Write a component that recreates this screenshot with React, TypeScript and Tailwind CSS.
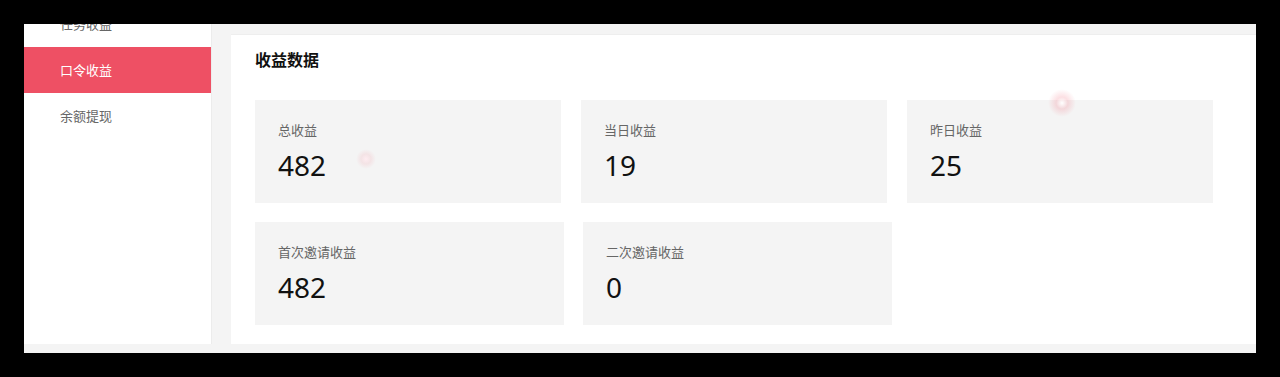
import React from "react";

const menu = [
  { label: "任务收益", active: false },
  { label: "口令收益", active: true },
  { label: "余额提现", active: false },
];

const topStats = [
  { label: "总收益", value: "482" },
  { label: "当日收益", value: "19" },
  { label: "昨日收益", value: "25" },
];

const inviteStats = [
  { label: "首次邀请收益", value: "482" },
  { label: "二次邀请收益", value: "0" },
];

function StatBox({ label, value, width }: { label: string; value: string; width: string }) {
  return (
    <div className={`${width} h-[103px] shrink-0 bg-[#f4f4f4] pl-[23px] pt-[20px]`}>
      <div className="text-[13px] leading-[20px] text-[#666]">{label}</div>
      <div className="mt-[7px] text-[28px] leading-[36px] text-[#111]">{value}</div>
    </div>
  );
}

export default function App() {
  return (
    <div
      className="h-[377px] w-[1280px] bg-black pl-[24px] pt-[24px]"
      style={{ fontFamily: '"Noto Sans", "Noto Sans CJK SC", sans-serif' }}
    >
      <div className="relative flex h-[329px] w-[1232px] overflow-hidden bg-[#f4f4f4] pb-[9px]">
        {/* sidebar */}
        <aside className="w-[188px] shrink-0 border-r border-[#ececec] bg-white">
          <ul className="-mt-[23px]">
            {menu.map((m) => (
              <li
                key={m.label}
                className={
                  m.active
                    ? "flex h-[46px] items-center bg-[#ee5064] pl-[36px] pt-[2px] text-[13px] text-white"
                    : "flex h-[46px] items-center pl-[36px] pt-[2px] text-[13px] text-[#666]"
                }
              >
                {m.label}
              </li>
            ))}
          </ul>
        </aside>

        {/* content */}
        <main className="min-w-0 flex-1 pl-[19px] pt-[10px]">
          <section className="h-[310px] w-[1060px] border-t border-[#eeeeee] bg-white pl-[24px] pt-[13px]">
            <h2 className="text-[16px] font-bold leading-[24px] text-[#111]">收益数据</h2>
            <div className="mt-[28px] flex gap-[20px]">
              {topStats.map((s) => (
                <StatBox key={s.label} {...s} width="w-[306px]" />
              ))}
            </div>
            <div className="mt-[19px] flex gap-[19px]">
              {inviteStats.map((s) => (
                <StatBox key={s.label} {...s} width="w-[309px]" />
              ))}
            </div>
          </section>
        </main>

        {/* cursor glow artifacts */}
        <div className="pointer-events-none absolute left-[332px] top-[125px] h-[20px] w-[20px] rounded-full bg-[radial-gradient(circle,rgba(255,235,240,0.9)_0%,rgba(238,80,100,0.1)_35%,rgba(238,80,100,0)_70%)]" />
        <div className="pointer-events-none absolute left-[1024px] top-[65px] h-[28px] w-[28px] rounded-full bg-[radial-gradient(circle,rgba(255,255,255,1)_0%,rgba(238,80,100,0.18)_30%,rgba(238,80,100,0)_70%)]" />
      </div>
    </div>
  );
}
